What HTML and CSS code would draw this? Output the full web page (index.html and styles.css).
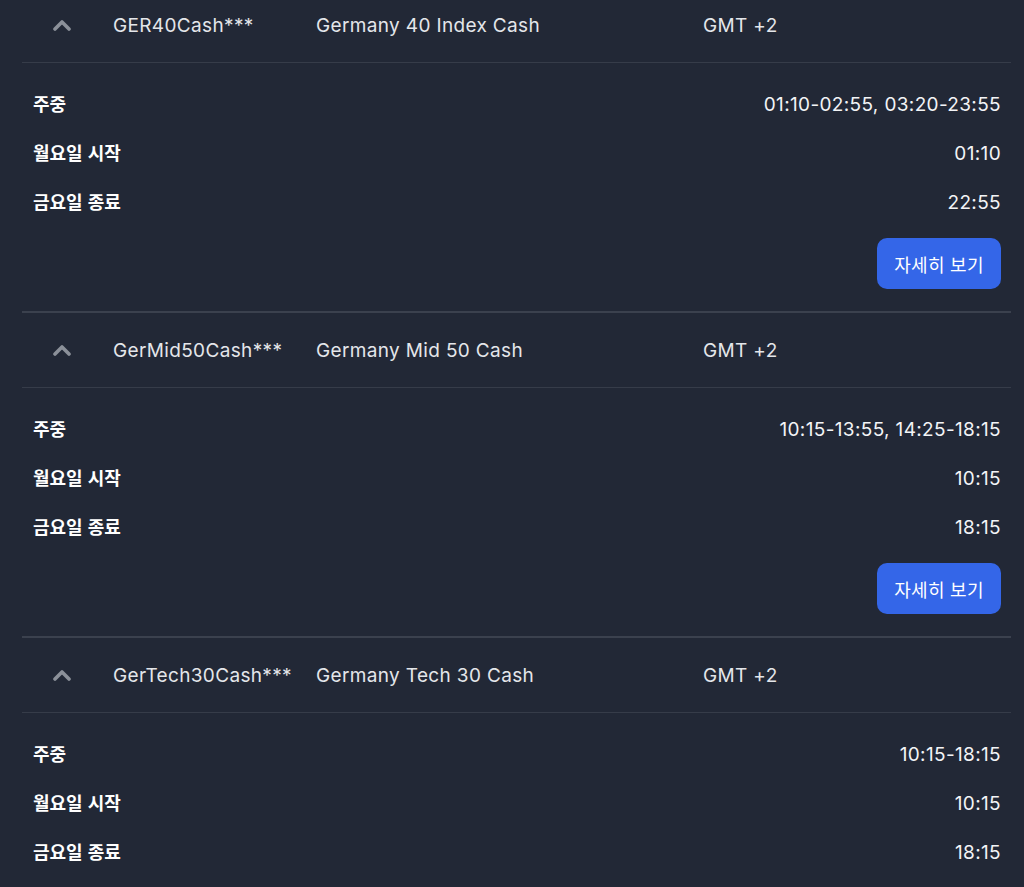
FILE: index.html
```html
<!DOCTYPE html>
<html lang="ko">
<head>
<meta charset="utf-8">
<link rel="stylesheet" href="styles.css">
</head>
<body>
<div class="list">
  <section class="item">
    <div class="head">
      <span class="chev"><svg width="20" height="12" viewBox="0 0 20 12"><path d="M3 10 L10 3 L17 10" fill="none" stroke="#8b9099" stroke-width="3.6" stroke-linecap="round" stroke-linejoin="round"/></svg></span>
      <span class="sym">GER40Cash***</span>
      <span class="desc">Germany 40 Index Cash</span>
      <span class="tz">GMT +2</span>
    </div>
    <div class="body">
      <div class="row"><span class="lbl">주중</span><span class="val">01:10-02:55, 03:20-23:55</span></div>
      <div class="row"><span class="lbl">월요일 시작</span><span class="val">01:10</span></div>
      <div class="row"><span class="lbl">금요일 종료</span><span class="val">22:55</span></div>
      <div class="actions"><button class="btn">자세히 보기</button></div>
    </div>
  </section>
  <section class="item">
    <div class="head">
      <span class="chev"><svg width="20" height="12" viewBox="0 0 20 12"><path d="M3 10 L10 3 L17 10" fill="none" stroke="#8b9099" stroke-width="3.6" stroke-linecap="round" stroke-linejoin="round"/></svg></span>
      <span class="sym">GerMid50Cash***</span>
      <span class="desc">Germany Mid 50 Cash</span>
      <span class="tz">GMT +2</span>
    </div>
    <div class="body">
      <div class="row"><span class="lbl">주중</span><span class="val">10:15-13:55, 14:25-18:15</span></div>
      <div class="row"><span class="lbl">월요일 시작</span><span class="val">10:15</span></div>
      <div class="row"><span class="lbl">금요일 종료</span><span class="val">18:15</span></div>
      <div class="actions"><button class="btn">자세히 보기</button></div>
    </div>
  </section>
  <section class="item">
    <div class="head">
      <span class="chev"><svg width="20" height="12" viewBox="0 0 20 12"><path d="M3 10 L10 3 L17 10" fill="none" stroke="#8b9099" stroke-width="3.6" stroke-linecap="round" stroke-linejoin="round"/></svg></span>
      <span class="sym">GerTech30Cash***</span>
      <span class="desc">Germany Tech 30 Cash</span>
      <span class="tz">GMT +2</span>
    </div>
    <div class="body">
      <div class="row"><span class="lbl">주중</span><span class="val">10:15-18:15</span></div>
      <div class="row"><span class="lbl">월요일 시작</span><span class="val">10:15</span></div>
      <div class="row"><span class="lbl">금요일 종료</span><span class="val">18:15</span></div>
      <div class="actions"><button class="btn">자세히 보기</button></div>
    </div>
  </section>
</div>
</body>
</html>
```

FILE: styles.css
```css
html, body {
  margin: 0;
  padding: 0;
  background: #222836;
  height: 100%;
  overflow: hidden;
}
body {
  font-family: Inter, "Noto Sans CJK KR", sans-serif;
  color: #f3f4f6;
  font-size: 19px;
  letter-spacing: 0.35px;
}
.list {
  margin: -12px 13px 0 22px;
}
.item {
  border-bottom: 2px solid #3b414e;
}
.head {
  height: 74px;
  display: grid;
  grid-template-columns: 91px 203px 387px 1fr;
  align-items: center;
  border-bottom: 1px solid #363c49;
  color: #e4e6ea;
}
.chev {
  display: flex;
  padding-left: 30px;
}
.body {
  padding: 15px 10px 22px 11px;
}
.row {
  height: 49px;
  display: flex;
  align-items: center;
  justify-content: space-between;
}
.lbl {
  font-family: "Noto Sans CJK KR", sans-serif;
  font-weight: 700;
  font-size: 18px;
  letter-spacing: 0;
  color: #ffffff;
}
.val {
  color: #f3f4f6;
  padding-top: 3px;
}
.actions {
  display: flex;
  justify-content: flex-end;
  margin-top: 13px;
}
.btn {
  width: 124px;
  height: 51px;
  border: none;
  border-radius: 10px;
  background: #3466e8;
  color: #ffffff;
  font-family: "Noto Sans CJK KR", sans-serif;
  font-size: 18px;
  letter-spacing: 0.3px;
  padding: 0;
}
```
